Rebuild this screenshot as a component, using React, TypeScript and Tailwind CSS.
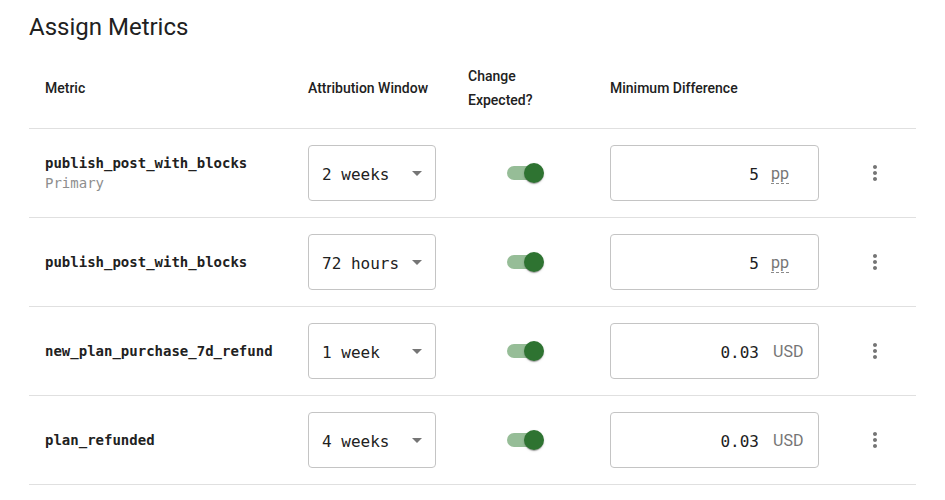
import React from "react";

type Row = {
  name: string;
  primary?: boolean;
  window: string;
  value: string;
  unit: string;
};

const ROWS: Row[] = [
  { name: "publish_post_with_blocks", primary: true, window: "2 weeks", value: "5", unit: "pp" },
  { name: "publish_post_with_blocks", window: "72 hours", value: "5", unit: "pp" },
  { name: "new_plan_purchase_7d_refund", window: "1 week", value: "0.03", unit: "USD" },
  { name: "plan_refunded", window: "4 weeks", value: "0.03", unit: "USD" },
];

const COLS = "grid grid-cols-[263px_160px_142px_241px_80px]";
const MONO = "font-['DejaVu_Sans_Mono',monospace]";

function Toggle() {
  return (
    <span className="relative block w-[37px] h-[20px] ml-[4px]">
      <span className="absolute left-0 top-[3px] w-[34px] h-[14px] rounded-full bg-[#96bd97]" />
      <span className="absolute right-0 top-0 w-[20px] h-[20px] rounded-full bg-[#2e7331] shadow-[0_2px_1px_-1px_rgba(0,0,0,0.2),0_1px_1px_0_rgba(0,0,0,0.14),0_1px_3px_0_rgba(0,0,0,0.12)]" />
    </span>
  );
}

function Select({ value }: { value: string }) {
  return (
    <div className="w-[128px] h-[56px] rounded-[4px] border border-[#c4c4c4] flex items-center justify-between pl-[13px] pr-[6px]">
      <span className={`${MONO} text-[16px] text-[#212121] pt-[3px]`}>{value}</span>
      <svg width="24" height="24" viewBox="0 0 24 24" className="fill-[#757575]">
        <path d="M7 10l5 5 5-5z" />
      </svg>
    </div>
  );
}

function Difference({ value, unit }: { value: string; unit: string }) {
  return (
    <div className="w-[209px] h-[56px] rounded-[4px] border border-[#c4c4c4] flex items-center justify-end pr-[13px]">
      <span className={`${MONO} text-[16px] text-[#212121] mr-[12px] pt-[3px]`}>{value}</span>
      <span className="w-[34px] text-[16px] text-[#757575] pt-[2px]">
        {unit === "pp" ? (
          <span className="border-b border-dashed border-[#8a8a8a] leading-[19px] inline-block">pp</span>
        ) : (
          <span className="pl-[2px]">{unit}</span>
        )}
      </span>
    </div>
  );
}

function Kebab() {
  return (
    <button className="w-[48px] h-[48px] flex items-center justify-center rounded-full">
      <svg width="24" height="24" viewBox="0 0 24 24" className="fill-[#757575]">
        <path d="M12 8c1.1 0 2-.9 2-2s-.9-2-2-2-2 .9-2 2 .9 2 2 2zm0 2c-1.1 0-2 .9-2 2s.9 2 2 2 2-.9 2-2-.9-2-2-2zm0 6c-1.1 0-2 .9-2 2s.9 2 2 2 2-.9 2-2-.9-2-2-2z" />
      </svg>
    </button>
  );
}

export default function App() {
  return (
    <div className="w-[945px] h-[500px] bg-white px-[29px] pt-[11px] font-['Roboto',sans-serif] text-[#212121]">
      <h2 className="text-[24px] leading-[32px] font-normal mb-[5px]">Assign Metrics</h2>

      {/* header */}
      <div className={`${COLS} h-[81px] items-center border-b border-[#e0e0e0] text-[14px] font-medium leading-[24px]`}>
        <div className="pl-4">Metric</div>
        <div className="pl-4">Attribution Window</div>
        <div className="pl-4">
          <div>Change</div>
          <div>Expected?</div>
        </div>
        <div className="pl-4">Minimum Difference</div>
        <div />
      </div>

      {/* rows */}
      {ROWS.map((row, i) => (
        <div key={i} className={`${COLS} h-[89px] items-center border-b border-[#e0e0e0]`}>
          <div className="pl-4">
            <div className={`${MONO} text-[14px] leading-[20px] font-bold text-[#212121]`}>{row.name}</div>
            {row.primary && (
              <div className={`${MONO} text-[14px] leading-[20px] text-[#8e8e8e]`}>Primary</div>
            )}
          </div>
          <div className="pl-4">
            <Select value={row.window} />
          </div>
          <div className="flex justify-center">
            <Toggle />
          </div>
          <div className="pl-4">
            <Difference value={row.value} unit={row.unit} />
          </div>
          <div className="flex justify-center">
            <Kebab />
          </div>
        </div>
      ))}
    </div>
  );
}
